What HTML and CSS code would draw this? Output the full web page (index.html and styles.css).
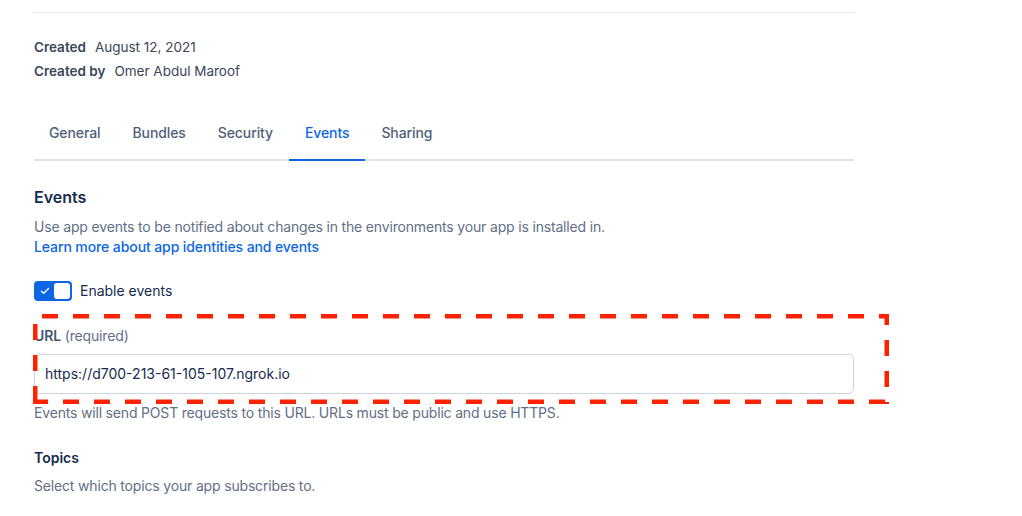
FILE: index.html
```html
<!DOCTYPE html>
<html lang="en">
<head>
<meta charset="utf-8">
<title>App settings – Events</title>
<link rel="stylesheet" href="styles.css">
</head>
<body>
<div class="page">
  <div class="divider"></div>

  <dl class="meta">
    <div class="meta-row"><dt>Created</dt><dd>August 12, 2021</dd></div>
    <div class="meta-row"><dt>Created by</dt><dd>Omer Abdul Maroof</dd></div>
  </dl>

  <nav class="tabs">
    <a class="tab">General</a>
    <a class="tab">Bundles</a>
    <a class="tab">Security</a>
    <a class="tab active">Events</a>
    <a class="tab">Sharing</a>
  </nav>

  <h2 class="heading">Events</h2>
  <p class="desc">Use app events to be notified about changes in the environments your app is installed in.</p>
  <a class="link">Learn more about app identities and events</a>

  <label class="toggle-row">
    <span class="toggle">
      <svg class="check" width="10" height="8" viewBox="0 0 10 8"><path d="M1.5 4.2 L3.8 6.3 L8.5 1.6" fill="none" stroke="#fff" stroke-width="1.4" stroke-linecap="round" stroke-linejoin="round"/></svg>
      <span class="knob"></span>
    </span>
    <span class="toggle-label">Enable events</span>
  </label>

  <div class="field">
    <div class="field-label"><span class="field-name">URL</span> <span class="field-hint">(required)</span></div>
    <div class="input">https://d700-213-61-105-107.ngrok.io</div>
    <p class="helper">Events will send POST requests to this URL. URLs must be public and use HTTPS.</p>
  </div>

  <h3 class="subheading">Topics</h3>
  <p class="desc small-gap">Select which topics your app subscribes to.</p>
</div>

<svg class="annotation" width="1022" height="516" viewBox="0 0 1022 516">
  <g fill="none" stroke="#ff2200" stroke-width="4.5" stroke-dasharray="16 15">
    <path d="M42 316.25 H889"/>
    <path d="M886.75 314 V404" stroke-dashoffset="5"/>
    <path d="M35.25 324 V404"/>
    <path d="M33 401.75 H889" stroke-dashoffset="1"/>
  </g>
</svg>
</body>
</html>
```
FILE: styles.css
```css
* { box-sizing: border-box; }

html, body {
  margin: 0;
  padding: 0;
  background: #ffffff;
}

body {
  font-family: Inter, "Noto Sans", "Liberation Sans", sans-serif;
  font-size: 14px;
  line-height: 20px;
  color: #172b4d;
  position: relative;
  width: 1022px;
  height: 516px;
  overflow: hidden;
}

.page {
  padding: 12px 0 0 34px;
  width: 854px;
}

.divider {
  height: 1px;
  background: #e6e8eb;
}

.meta {
  margin: 22px 0 0;
}

.meta-row {
  display: flex;
  gap: 9px;
  line-height: 24px;
  font-size: 13.5px;
  color: #3b4658;
}

.meta-row dt {
  font-weight: 600;
}

.meta-row dd {
  margin: 0;
}

.tabs {
  display: flex;
  margin-top: 24px;
  border-bottom: 2px solid #e1e4e8;
}

.tab {
  position: relative;
  padding: 16px 16px 16px;
  color: #505f79;
  font-weight: 500;
  line-height: 20px;
  letter-spacing: -0.1px;
}

.tab:first-child {
  padding-left: 15px;
}

.tab.active {
  color: #0c66e4;
}

.tab.active::after {
  content: "";
  position: absolute;
  left: 0;
  right: 0;
  bottom: -2px;
  height: 2px;
  background: #0c66e4;
}

.heading {
  margin: 24px 0 0;
  font-size: 16px;
  line-height: 24px;
  font-weight: 600;
  color: #172b4d;
}

.desc {
  margin: 8px 0 0;
  color: #626f86;
  letter-spacing: -0.17px;
}

.link {
  display: block;
  color: #0c66e4;
  font-weight: 500;
  letter-spacing: -0.1px;
}

.toggle-row {
  display: flex;
  align-items: center;
  gap: 8px;
  margin-top: 24px;
  height: 20px;
}

.toggle {
  position: relative;
  display: flex;
  align-items: center;
  width: 38px;
  height: 20px;
  border-radius: 4px;
  background: #0c66e4;
  padding: 0 2px 0 6px;
  justify-content: space-between;
}

.check {
  display: block;
}

.knob {
  width: 16px;
  height: 16px;
  border-radius: 3px;
  background: #ffffff;
}

.toggle-label {
  color: #172b4d;
}

.field {
  margin-top: 25px;
}

.field-label {
  line-height: 20px;
  letter-spacing: -0.15px;
}

.field-name {
  font-weight: 600;
  color: #44546f;
}

.field-hint {
  color: #626f86;
}

.input {
  margin-top: 8px;
  width: 820px;
  height: 40px;
  border: 1px solid #cdd4dc;
  border-radius: 5px;
  padding: 0 10px;
  display: flex;
  align-items: center;
  color: #172b4d;
  letter-spacing: 0;
}

.helper {
  margin: 9px 0 0;
  color: #626f86;
  letter-spacing: -0.18px;
}

.subheading {
  margin: 25px 0 0;
  font-size: 14px;
  line-height: 20px;
  font-weight: 600;
  color: #172b4d;
}

.small-gap {
  margin-top: 8px;
}

.annotation {
  position: absolute;
  left: 0;
  top: 0;
  pointer-events: none;
}
```
